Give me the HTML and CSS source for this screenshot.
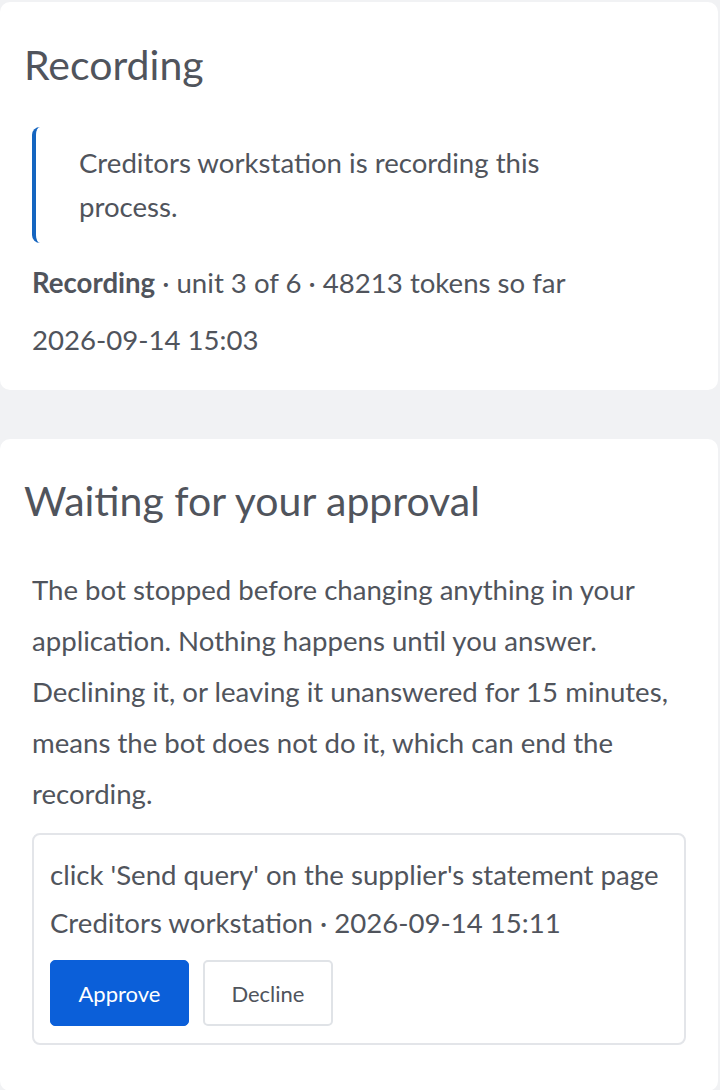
FILE: index.html
```html
<!DOCTYPE html>
<html lang="en">
<head>
<meta charset="utf-8">
<title>Recording</title>
<link rel="stylesheet" href="styles.css">
</head>
<body>
<main class="page">
  <section class="card card-status">
    <h2 class="card-title">Recording</h2>
    <div class="card-body">
      <blockquote class="notice">Creditors workstation is recording this process.</blockquote>
      <p class="meta"><strong>Recording</strong> · unit 3 of 6 · 48213 tokens so far</p>
      <p class="meta">2026-09-14 15:03</p>
    </div>
  </section>
  <section class="card card-approval">
    <h2 class="card-title">Waiting for your approval</h2>
    <div class="card-body">
      <p class="lead">The bot stopped before changing anything in your application. Nothing happens until you answer. Declining it, or leaving it unanswered for 15 minutes, means the bot does not do it, which can end the recording.</p>
      <div class="request">
        <p class="request-line">click 'Send query' on the supplier's statement page</p>
        <p class="request-line">Creditors workstation · 2026-09-14 15:11</p>
        <div class="actions">
          <button class="btn btn-primary" type="button">Approve</button>
          <button class="btn btn-secondary" type="button">Decline</button>
        </div>
      </div>
    </div>
  </section>
</main>
</body>
</html>
```
FILE: styles.css
```css
* { box-sizing: border-box; }
html, body { margin: 0; padding: 0; }
body {
  background: #f1f2f4;
  font-family: Lato, "Noto Sans", sans-serif;
  color: #50545c;
  font-size: 27.6px;
}
.page {
  padding: 2px 2px 0 0;
  display: flex;
  flex-direction: column;
  gap: 49px;
}
.card {
  background: #ffffff;
  border-radius: 10px;
  padding: 37.5px 24px 21px;
}
.card-approval {
  padding-bottom: 46px;
}
.card-title {
  margin: 0;
  font-size: 41px;
  font-weight: 400;
  line-height: 49.2px;
  color: #50545c;
}
.card-body {
  padding: 0 8px;
}
.notice {
  margin: 38.5px 0 0;
  padding: 14px 64px 14.5px 43px;
  border-left: 4px solid #1565c0;
  border-radius: 8px;
  line-height: 43.4px;
}
.meta {
  margin: 0;
  line-height: 57.6px;
}
.notice + .meta {
  margin-top: 11px;
}
.meta strong { font-weight: 700; }
.lead {
  margin: 38.5px 0 0;
  line-height: 51px;
}
.request {
  margin-top: 14px;
  border: 2px solid #e3e5e9;
  border-radius: 8px;
  padding: 16px 16px 17px;
}
.request-line {
  margin: 0;
  line-height: 48px;
}
.actions {
  display: flex;
  gap: 14px;
  margin-top: 13.5px;
}
.btn {
  font-family: inherit;
  font-size: 22px;
  height: 66px;
  border-radius: 5px;
  cursor: pointer;
}
.btn-primary {
  background: #0b5fd9;
  color: #ffffff;
  border: 1px solid #0b5fd9;
  padding: 0 27.5px;
}
.btn-secondary {
  background: #ffffff;
  color: #50545c;
  border: 2px solid #e0e3e7;
  padding: 0 26.5px;
}
```
